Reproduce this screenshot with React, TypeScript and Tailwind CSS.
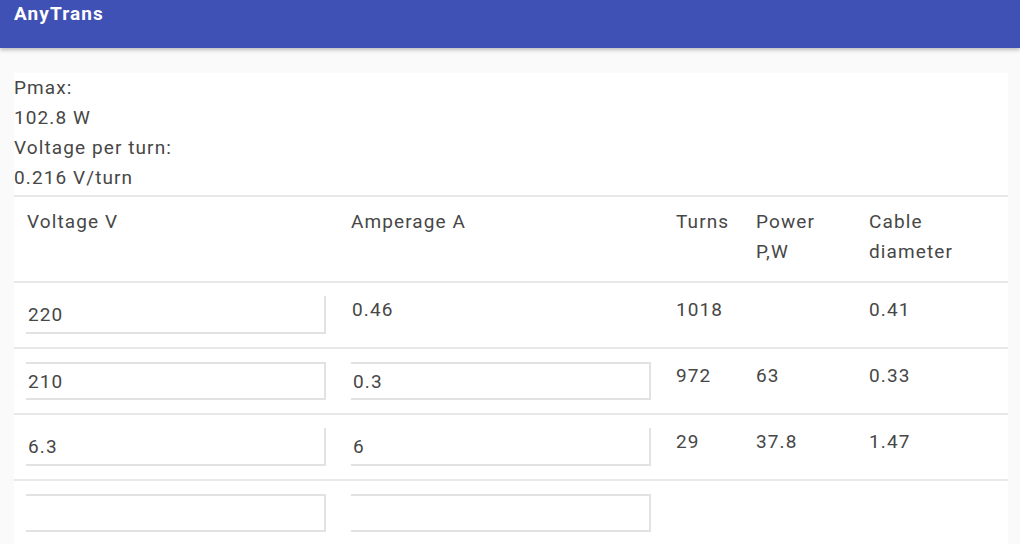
import React from 'react'

type Row = {
  voltage: string
  amperage: string
  ampIsInput: boolean
  turns: string
  power: string
  cable: string
  topBorder: boolean
}

const rows: Row[] = [
  { voltage: '220', amperage: '0.46', ampIsInput: false, turns: '1018', power: '', cable: '0.41', topBorder: false },
  { voltage: '210', amperage: '0.3', ampIsInput: true, turns: '972', power: '63', cable: '0.33', topBorder: true },
  { voltage: '6.3', amperage: '6', ampIsInput: true, turns: '29', power: '37.8', cable: '1.47', topBorder: false },
  { voltage: '', amperage: '', ampIsInput: true, turns: '', power: '', cable: '', topBorder: true },
]

const Field = ({ value, topBorder }: { value: string; topBorder: boolean }) => (
  <input
    readOnly
    value={value}
    className={
      'block w-[300px] h-[38px] pl-[2px] bg-white text-[19px] tracking-[1.1px] text-[#474747] outline-none border-r-2 border-b-2 border-[#e2e2e2] ' +
      (topBorder ? 'border-t-2' : 'border-t-0')
    }
  />
)

const App = () => {
  return (
    <div className="w-[1020px] h-[544px] overflow-hidden bg-[#fafafa] font-['Roboto',sans-serif] text-[#474747] tracking-[1.1px]">
      <div className="relative z-10 h-[48px] bg-[#3f51b5] px-[14px] shadow-[0_2px_4px_rgba(0,0,0,0.25)]">
        <h1 className="text-[19px] leading-[28px] font-bold text-white">AnyTrans</h1>
      </div>

      <div className="pt-[25px] pl-[14px] pr-[12px]">
        <div className="bg-white">
          <div className="text-[19px] leading-[30px] pb-[2px]">
            <div>Pmax:</div>
            <div>102.8 W</div>
            <div>Voltage per turn:</div>
            <div>0.216 V/turn</div>
          </div>

          <div className="border-t-2 border-[#e8e8e8]">
            <div className="grid grid-cols-[325px_325px_80px_113px_1fr] pt-[10px] pb-[14px] text-[19px] leading-[30px] border-b-2 border-[#e8e8e8]">
              <div className="pl-[13px]">Voltage V</div>
              <div className="pl-[12px]">Amperage A</div>
              <div className="pl-[12px]">Turns</div>
              <div className="pl-[12px]">
                Power
                <br />
                P,W
              </div>
              <div className="pl-[12px]">
                Cable
                <br />
                diameter
              </div>
            </div>

            {rows.map((row, i) => (
              <div
                key={i}
                className={
                  'grid grid-cols-[325px_325px_80px_113px_1fr] h-[64px] text-[19px] leading-[30px] ' +
                  (i < rows.length - 1 ? 'box-content border-b-2 border-[#e8e8e8]' : '')
                }
              >
                <div className="pl-[12px] pt-[13px]">
                  <Field value={row.voltage} topBorder={row.topBorder} />
                </div>
                <div className="pl-[12px] pt-[13px]">
                  {row.ampIsInput ? (
                    <Field value={row.amperage} topBorder={row.topBorder} />
                  ) : (
                    <div className="pl-[1px] -mt-[1px]">{row.amperage}</div>
                  )}
                </div>
                <div className="pl-[12px] pt-[12px]">{row.turns}</div>
                <div className="pl-[12px] pt-[12px]">{row.power}</div>
                <div className="pl-[12px] pt-[12px]">{row.cable}</div>
              </div>
            ))}
          </div>
        </div>
      </div>
    </div>
  )
}

export default App
